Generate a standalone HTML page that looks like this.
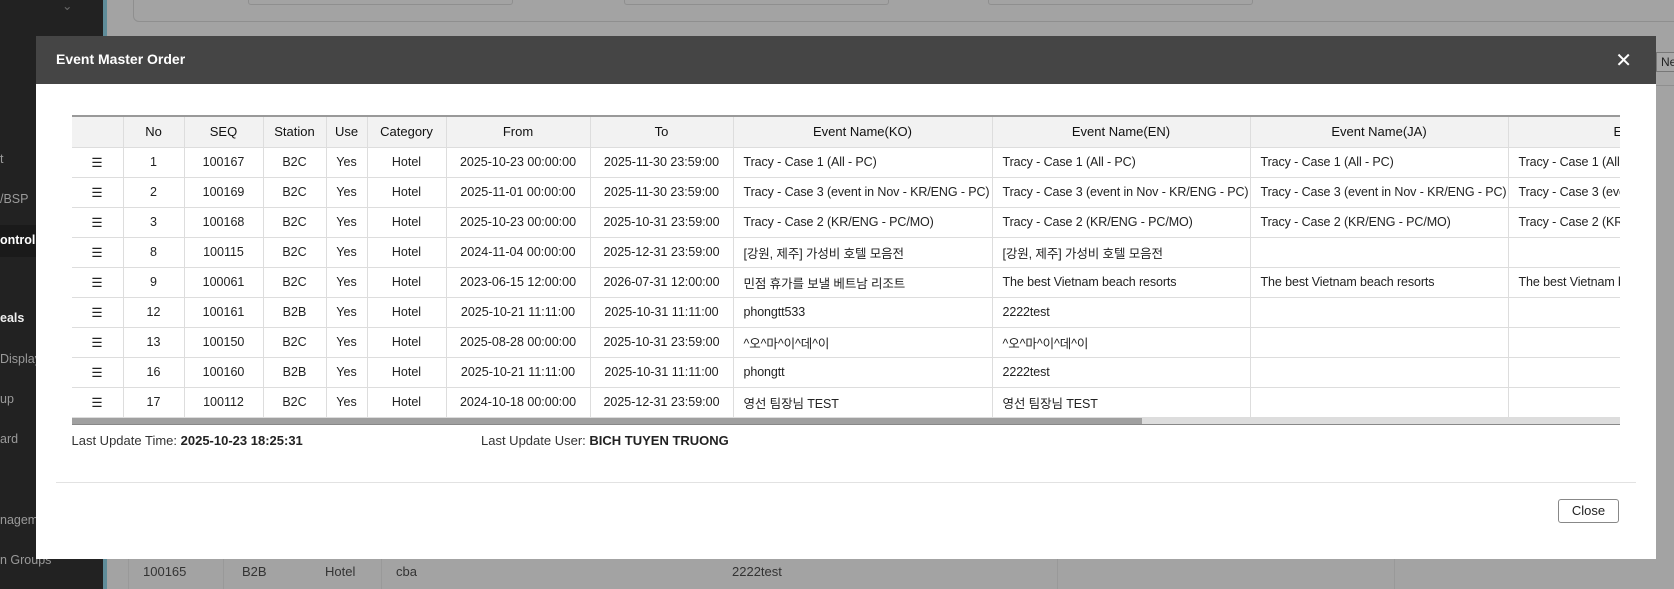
<!DOCTYPE html>
<html><head><meta charset="utf-8"><style>
*{box-sizing:border-box;margin:0;padding:0}
body{width:1674px;height:589px;overflow:hidden;background:#a3a3a3;font-family:"Liberation Sans","Noto Sans CJK KR",sans-serif;font-size:12.5px;color:#222;position:relative}
.sb{position:absolute;left:0;top:0;width:103px;height:589px;background:#222}
.sb div{position:absolute;left:0;color:#9a9a9a;font-size:12.5px;white-space:nowrap}
.teal{position:absolute;left:103px;top:0;width:4px;height:589px;background:#5f8c99}
.modal{position:absolute;left:36px;top:36px;width:1620px;height:523px;background:#fff}
.hd{height:48px;background:#454545;color:#fff;font-weight:bold;font-size:14px;padding:15px 0 0 20px}
.x{position:absolute;right:24px;top:12px;color:#fff;font-size:20px;font-weight:normal}
.tw{position:absolute;left:35.5px;top:79px;width:1548.5px;overflow:hidden}
table{border-collapse:collapse;table-layout:fixed;width:1700px}
th,td{border:1px solid #ddd;height:30px;white-space:nowrap;overflow:hidden;text-align:center;font-weight:normal}
th{background:#f2f2f2;height:31px;border-top:2px solid #999;font-size:13px;color:#111}
td.l{text-align:left;padding-left:10px;letter-spacing:-0.1px}
tr>*:first-child{border-left:none}
.sc{height:7px;background:#ddd;border-bottom:1px solid #888;position:relative}
.sc i{position:absolute;left:0;top:0;width:1070px;height:6px;background:#a0a0a0}
.ft{position:absolute;top:397px;font-size:13px;color:#333}
.ft b{color:#222}
.line{position:absolute;left:20px;top:446px;width:1580px;border-top:1px solid #e2e2e2}
.btn{position:absolute;left:1522px;top:463px;width:61px;height:24px;border:1px solid #888;border-radius:3px;text-align:center;line-height:22px;font-size:13px}
</style></head><body>
<div style="position:absolute;left:133px;top:-10px;width:1560px;height:32px;border:1px solid #8f8f8f;border-radius:6px"></div>
<div style="position:absolute;left:248px;top:-5px;width:265px;height:10px;border:1px solid #8f8f8f;border-radius:3px"></div>
<div style="position:absolute;left:624px;top:-5px;width:265px;height:10px;border:1px solid #8f8f8f;border-radius:3px"></div>
<div style="position:absolute;left:988px;top:-5px;width:265px;height:10px;border:1px solid #8f8f8f;border-radius:3px"></div>
<div style="position:absolute;left:107px;top:85px;width:1567px;border-top:1px solid #8f8f8f"></div>
<div style="position:absolute;left:1656px;top:52px;width:30px;height:20px;border:1px solid #777;background:#a8a8a8;font-size:12px;padding:2px 0 0 4px">Ne</div>
<div class="sb">
<div style="top:-2px;left:62px;color:#666">⌄</div>
<div style="top:152px">t</div>
<div style="top:192px">/BSP</div>
<div style="top:225px;height:32px;width:103px;background:#1a1a1a"></div>
<div style="top:233px;color:#fff;font-weight:bold">ontrol</div>
<div style="top:311px;color:#eee;font-weight:bold">eals</div>
<div style="top:352px">Display</div>
<div style="top:392px">up</div>
<div style="top:432px">ard</div>
<div style="top:513px">nageme</div>
<div style="top:553px">n Groups</div>
</div>
<div class="teal"></div>
<div style="position:absolute;left:107px;top:559px;width:1567px;height:30px;background:#a3a3a3;font-size:13px;color:#333">
<span style="position:absolute;left:36px;top:5px">100165</span><span style="position:absolute;left:135px;top:5px">B2B</span><span style="position:absolute;left:218px;top:5px">Hotel</span><span style="position:absolute;left:289px;top:5px">cba</span><span style="position:absolute;left:625px;top:5px">2222test</span>
<i style="position:absolute;left:21px;top:0;height:30px;border-left:1px solid #999"></i><i style="position:absolute;left:116px;top:0;height:30px;border-left:1px solid #999"></i><i style="position:absolute;left:274px;top:0;height:30px;border-left:1px solid #999"></i><i style="position:absolute;left:950px;top:0;height:30px;border-left:1px solid #999"></i><i style="position:absolute;left:1287px;top:0;height:30px;border-left:1px solid #999"></i>
</div>
<div class="modal">
<div class="hd">Event Master Order<span class="x">✕</span></div>
<div class="tw">
<table>
<colgroup><col style="width:51.5px"><col style="width:61px"><col style="width:79px"><col style="width:63px"><col style="width:41px"><col style="width:79px"><col style="width:144px"><col style="width:143px"><col style="width:259px"><col style="width:258px"><col style="width:258px"><col style="width:264px"></colgroup>
<tr><th></th><th>No</th><th>SEQ</th><th>Station</th><th>Use</th><th>Category</th><th>From</th><th>To</th><th>Event Name(KO)</th><th>Event Name(EN)</th><th>Event Name(JA)</th><th style="text-align:left;padding-left:105px">Event Name(ZH)</th></tr>
<tr><td>☰</td><td>1</td><td>100167</td><td>B2C</td><td>Yes</td><td>Hotel</td><td>2025-10-23 00:00:00</td><td>2025-11-30 23:59:00</td><td class="l">Tracy - Case 1 (All - PC)</td><td class="l">Tracy - Case 1 (All - PC)</td><td class="l">Tracy - Case 1 (All - PC)</td><td class="l">Tracy - Case 1 (All - PC)</td></tr>
<tr><td>☰</td><td>2</td><td>100169</td><td>B2C</td><td>Yes</td><td>Hotel</td><td>2025-11-01 00:00:00</td><td>2025-11-30 23:59:00</td><td class="l">Tracy - Case 3 (event in Nov - KR/ENG - PC)</td><td class="l">Tracy - Case 3 (event in Nov - KR/ENG - PC)</td><td class="l">Tracy - Case 3 (event in Nov - KR/ENG - PC)</td><td class="l">Tracy - Case 3 (event in Nov)</td></tr>
<tr><td>☰</td><td>3</td><td>100168</td><td>B2C</td><td>Yes</td><td>Hotel</td><td>2025-10-23 00:00:00</td><td>2025-10-31 23:59:00</td><td class="l">Tracy - Case 2 (KR/ENG - PC/MO)</td><td class="l">Tracy - Case 2 (KR/ENG - PC/MO)</td><td class="l">Tracy - Case 2 (KR/ENG - PC/MO)</td><td class="l">Tracy - Case 2 (KR/ENG)</td></tr>
<tr><td>☰</td><td>8</td><td>100115</td><td>B2C</td><td>Yes</td><td>Hotel</td><td>2024-11-04 00:00:00</td><td>2025-12-31 23:59:00</td><td class="l">[강원, 제주] 가성비 호텔 모음전</td><td class="l">[강원, 제주] 가성비 호텔 모음전</td><td class="l"></td><td class="l"></td></tr>
<tr><td>☰</td><td>9</td><td>100061</td><td>B2C</td><td>Yes</td><td>Hotel</td><td>2023-06-15 12:00:00</td><td>2026-07-31 12:00:00</td><td class="l">민점 휴가를 보낼 베트남 리조트</td><td class="l">The best Vietnam beach resorts</td><td class="l">The best Vietnam beach resorts</td><td class="l">The best Vietnam beach resorts</td></tr>
<tr><td>☰</td><td>12</td><td>100161</td><td>B2B</td><td>Yes</td><td>Hotel</td><td>2025-10-21 11:11:00</td><td>2025-10-31 11:11:00</td><td class="l">phongtt533</td><td class="l">2222test</td><td class="l"></td><td class="l"></td></tr>
<tr><td>☰</td><td>13</td><td>100150</td><td>B2C</td><td>Yes</td><td>Hotel</td><td>2025-08-28 00:00:00</td><td>2025-10-31 23:59:00</td><td class="l">^오^마^이^데^이</td><td class="l">^오^마^이^데^이</td><td class="l"></td><td class="l"></td></tr>
<tr><td>☰</td><td>16</td><td>100160</td><td>B2B</td><td>Yes</td><td>Hotel</td><td>2025-10-21 11:11:00</td><td>2025-10-31 11:11:00</td><td class="l">phongtt</td><td class="l">2222test</td><td class="l"></td><td class="l"></td></tr>
<tr><td>☰</td><td>17</td><td>100112</td><td>B2C</td><td>Yes</td><td>Hotel</td><td>2024-10-18 00:00:00</td><td>2025-12-31 23:59:00</td><td class="l">영선 팀장님 TEST</td><td class="l">영선 팀장님 TEST</td><td class="l"></td><td class="l"></td></tr>
</table>
<div class="sc"><i></i></div>
</div>
<div class="ft" style="left:35.5px">Last Update Time: <b>2025-10-23 18:25:31</b></div>
<div class="ft" style="left:445px">Last Update User: <b>BICH TUYEN TRUONG</b></div>
<div class="line"></div>
<div class="btn">Close</div>
</div>
</body></html>
